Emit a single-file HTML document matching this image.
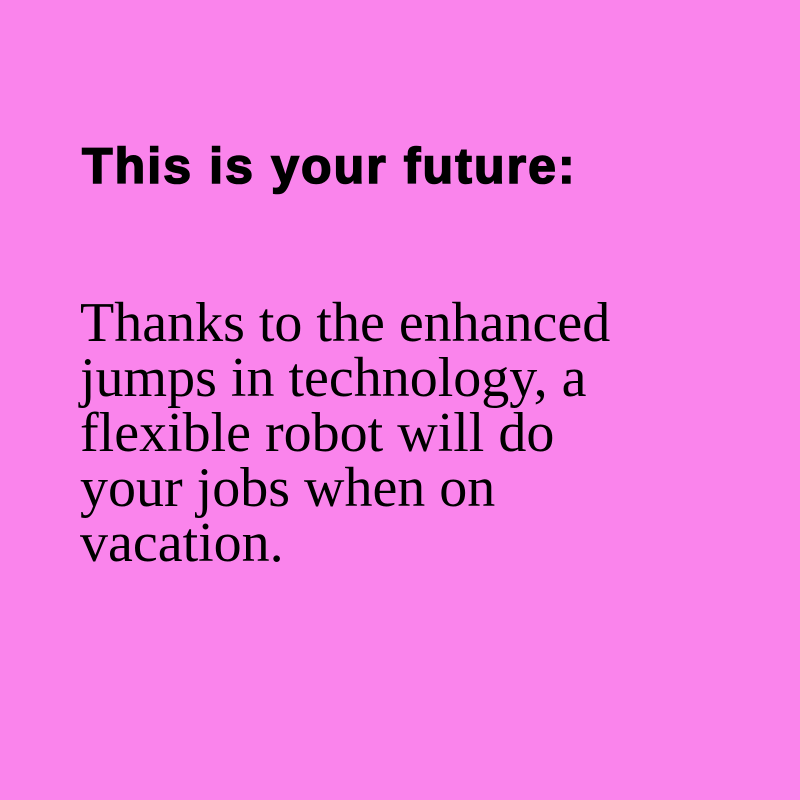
<!DOCTYPE html>
<html><head><style>
html,body{margin:0;padding:0;width:800px;height:800px;background:#fa84ec;overflow:hidden}
h1{position:absolute;left:82px;top:141px;margin:0;font:bold 50px/50px "Liberation Sans",sans-serif;letter-spacing:2.1px;-webkit-text-stroke:1.6px #000;color:#000;white-space:nowrap}
p{position:absolute;left:80px;top:296px;margin:0;font:56px/55px "Liberation Serif",serif;color:#000;width:700px;white-space:nowrap}
</style></head><body>
<h1>This is your future:</h1>
<p>Thanks to the enhanced<br>jumps in technology, a<br>flexible robot will do<br>your jobs when on<br>vacation.</p>
</body></html>
